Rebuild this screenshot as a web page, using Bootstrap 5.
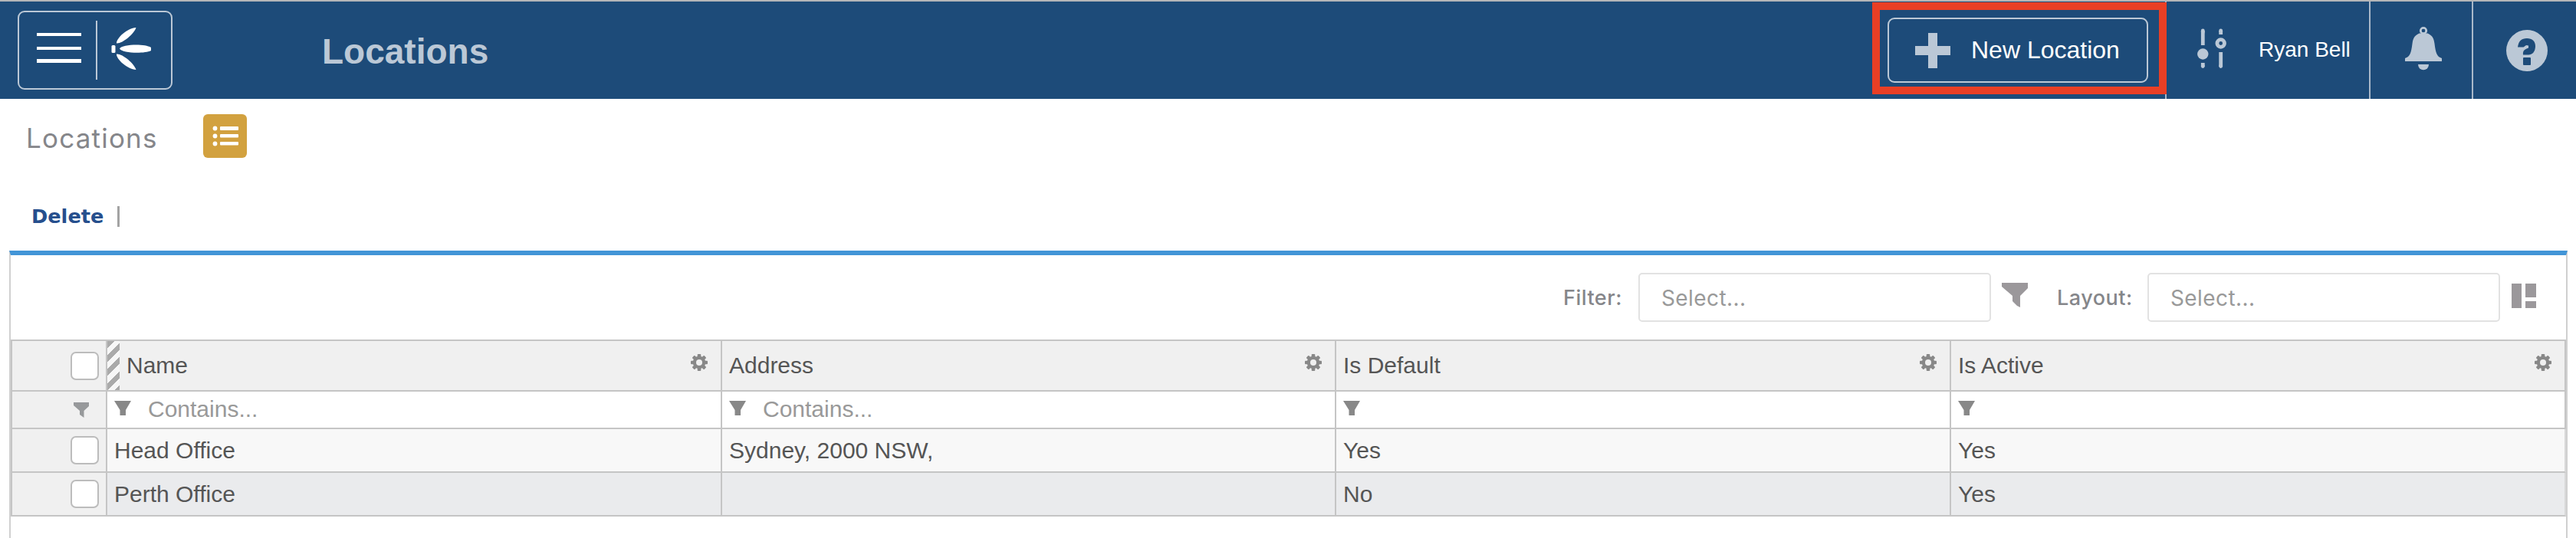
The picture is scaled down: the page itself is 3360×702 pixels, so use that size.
<!DOCTYPE html>
<html lang="en">
<head>
  <meta charset="UTF-8">
  <meta name="viewport" content="width=device-width, initial-scale=1.0">
  <title>Locations</title>
  <link href="https://cdn.jsdelivr.net/npm/bootstrap@5.3.0/dist/css/bootstrap.min.css" rel="stylesheet">
  <style>
    body {
      font-family: "Liberation Sans", Arial, sans-serif;
      font-size: 30px;
      line-height: 34px;
      color: #555;
      background: #fff;
      height: 702px;
      overflow: hidden;
    }

    svg {
      display: block;
      flex-shrink: 0;
    }

    /* top bar */
    .topbar {
      height: 129px;
      background: #1d4b79;
      border-top: 2px solid #b5b6b8;
      color: #fff;
    }

    .menu-box {
      width: 202px;
      height: 103px;
      margin: 12px 0 0 23px;
      border: 2px solid #bbc8d6;
      border-radius: 9px;
    }

    .page-title {
      margin: 39px 0 0 195px;
      font-size: 46px;
      line-height: 52px;
      font-weight: bold;
      color: #bbc8d6;
    }

    .highlight {
      width: 384px;
      height: 120px;
      margin-top: 1px;
      padding: 10px;
      border: 10px solid #e93f25;
      z-index: 1;
    }

    .new-btn {
      width: 340px;
      height: 85px;
      padding: 0 0 0 34px;
      border: 2px solid #bbc8d6;
      border-radius: 9px;
      color: #fff;
      font-size: 32px;
    }

    .new-btn span {
      margin: -1px 0 0 27px;
    }

    .top-cell {
      height: 127px;
      border-left: 2px solid #a9b8c9;
    }

    .user-cell {
      width: 266px;
      margin-left: -2px;
    }

    .user-cell span {
      margin-left: 40px;
      font-size: 28px;
      padding-top: 45px;
      line-height: 36px;
    }

    /* sub header */
    .subhead {
      height: 198px;
      padding: 20px 0 0 34px;
    }

    .soft-font {
      font-family: Inter, "Open Sans", sans-serif;
    }

    .crumb {
      width: 231px;
      padding-top: 9px;
      font-size: 35px;
      line-height: 44px;
      letter-spacing: 1.2px;
      color: #85868a;
    }

    .list-btn {
      width: 57px;
      height: 57px;
      background: #d2a13f;
      border-radius: 6px;
    }

    .actions {
      margin: 61px 0 0 7px;
      gap: 18px;
    }

    .delete-link {
      font-family: "DejaVu Sans", Verdana, sans-serif;
      font-size: 25.6px;
      line-height: 30px;
      font-weight: bold;
      color: #264f8d;
      text-decoration: none;
    }

    .sep {
      width: 3px;
      height: 27px;
      background: #a3a3a3;
    }

    /* grid panel */
    .panel {
      height: 400px;
      margin: 0 11px 0 12px;
      border: 2px solid #d0d0d0;
      border-top: 6px solid #4295d7;
    }

    .tools {
      height: 110px;
      padding: 23px 39px 0 0;
      font-size: 27px;
      color: #85868a;
    }

    .tool-label {
      width: 98px;
      font-weight: 500;
      line-height: 65px;
      letter-spacing: 0.5px;
    }

    .tool-label-wide {
      width: 118px;
      margin-left: 38px;
    }

    .tool-icon {
      margin-left: 14px;
    }

    .select-box {
      width: 460px;
      height: 64px;
      padding-left: 28px;
      border: 2px solid #e2e2e2;
      border-radius: 5px;
      font-size: 28px;
      line-height: 62px;
      letter-spacing: 0.4px;
      color: #999;
    }

    .grid-table {
      width: 3333px;
      table-layout: fixed;
      border-collapse: separate;
      border-spacing: 0;
      border-top: 2px solid #c5c5c5;
      border-left: 2px solid #c5c5c5;
    }

    .grid-table th,
    .grid-table td {
      padding: 0 0 0 9px;
      border-right: 2px solid #c5c5c5;
      border-bottom: 2px solid #c5c5c5;
      font-weight: normal;
      vertical-align: middle;
      white-space: nowrap;
    }

    .grid-table thead th { background: #f0f0f0; }
    .grid-table .row-head { height: 66px; }
    .grid-table .row-filter { height: 49px; }
    .grid-table .row-data { height: 57px; }
    .grid-table .row-data td { background: #f8f8f8; }
    .grid-table .row-alt td { background: #eaebed; }
    .grid-table tr td:first-child { background: #f0f0f0; }
    .grid-table .row-data td:last-child { border-right-color: #d8d8d8; }

    .grid-table .hatched {
      padding-left: 0;
    }

    .hatch {
      width: 16px;
      height: 64px;
      margin-right: 9px;
      background: repeating-linear-gradient(135deg, #aaa 0 6.5px, #f7f7f7 6.5px 13px);
    }

    .gear {
      margin: -8px 17px 0 0;
    }

    .check {
      width: 37px;
      height: 37px;
      margin-left: 67px;
      background: #fff;
      border: 2px solid #bcbcbc;
      border-radius: 7px;
    }

    .hint {
      margin: -1px 0 0 22px;
      color: #999;
    }
  </style>
</head>
<body>
  <!-- shared symbols -->
  <svg width="0" height="0" class="position-absolute">
    <symbol id="gear" viewBox="-11 -11 22 22">
      <g fill="#888">
        <rect x="-2.3" y="-11" width="4.6" height="22" rx="1"/>
        <rect x="-2.3" y="-11" width="4.6" height="22" rx="1" transform="rotate(45)"/>
        <rect x="-2.3" y="-11" width="4.6" height="22" rx="1" transform="rotate(90)"/>
        <rect x="-2.3" y="-11" width="4.6" height="22" rx="1" transform="rotate(135)"/>
        <circle r="8.3"/>
      </g>
      <circle r="4" fill="#f0f0f0"/>
    </symbol>
    <symbol id="funnel" viewBox="0 0 22 19">
      <path d="M0 0H22L15 12V19H7.500V12Z" fill="#888"/>
    </symbol>
  </svg>

  <header class="topbar d-flex align-items-start">
    <div class="menu-box flex-shrink-0">
      <svg width="198" height="99" viewBox="25 16 198 99">
        <path d="M48 43h58v4H48zM48 61h58v4H48zM48 77h58v5H48z" fill="#fff"/>
        <path d="M125 27h2v77h-2z" fill="#bbc8d6"/>
        <g fill="#fff">
          <rect x="145.500" y="59" width="5" height="10" rx="1.500"/>
          <path d="M156 63.500C159 58 188 56.500 197 62V66C188 70.500 159 69.500 156 63.500Z"/>
          <path d="M152 56.500C151.500 50 166 36.500 177.500 36C175 44 160 57 152 56.500Z"/>
          <path d="M152 70.500C151.500 77 166 90.500 177.500 91C175 83 160 70 152 70.500Z"/>
        </g>
      </svg>
    </div>
    <h1 class="page-title">Locations</h1>

    <div class="d-flex ms-auto">
      <div class="highlight position-relative">
        <button class="new-btn btn d-flex align-items-center">
          <svg width="46" height="46"><path d="M17 0h12v17h17v12H29v17H17V29H0V17h17z" fill="#bbc8d6"/></svg>
          <span>New Location</span>
        </button>
      </div>
      <div class="top-cell user-cell d-flex align-items-start">
        <svg width="80" height="127" viewBox="2826 2 80 127">
          <g stroke="#bbc8d6" stroke-width="4.800" fill="none">
            <path d="M2873.300 40v19M2873.300 82v5M2896.700 40v5M2896.700 68v19"/>
            <path d="M2873.300 40v2M2873.300 86v.6M2896.700 40v1M2896.700 86v.6" stroke-linecap="round"/>
          </g>
          <circle cx="2873.300" cy="70.500" r="7.200" fill="#bbc8d6"/>
          <circle cx="2896.700" cy="56.500" r="4.800" fill="none" stroke="#bbc8d6" stroke-width="4.800"/>
        </svg>
        <span>Ryan Bell</span>
      </div>
      <div class="top-cell">
        <svg width="132" height="127" viewBox="3092 2 132 127">
          <g fill="#bbc8d6">
            <circle cx="3161" cy="40" r="3.700" fill="none" stroke="#bbc8d6" stroke-width="2.800"/>
            <path d="M3155.500 43.500H3166.500C3173 46.500 3174.500 50 3175.500 57C3177 69 3178.500 74 3185 76V80H3137V76C3143.500 74 3145 69 3146.500 57C3147.500 50 3149 46.500 3155.500 43.500Z"/>
            <path d="M3154 84h14a7 7.300 0 0 1-14 0z"/>
          </g>
          <circle cx="3161" cy="40" r="2.100" fill="#1d4b79"/>
        </svg>
      </div>
      <div class="top-cell">
        <svg width="134" height="127" viewBox="3226 2 134 127">
          <circle cx="3296" cy="66" r="27" fill="#bbc8d6"/>
          <path d="M3284 61.500C3285 53.500 3289 50 3296 50C3303 50 3307 54 3307 60C3307 67 3303.500 71.500 3298 71.500H3291C3290.500 67 3292 64.500 3298 62.500V59.500L3295 59L3291.500 61.500Z" fill="#1d4b79"/>
          <rect x="3291" y="75" width="10" height="10" rx="1" fill="#1d4b79"/>
        </svg>
      </div>
    </div>
  </header>

  <section class="subhead">
    <div class="d-flex">
      <div class="crumb soft-font">Locations</div>
      <div class="list-btn">
        <svg width="57" height="57" viewBox="265 149 57 57" fill="#fff">
          <circle cx="280.500" cy="167.500" r="2.900"/>
          <circle cx="280.500" cy="177.500" r="2.900"/>
          <circle cx="280.500" cy="187.500" r="2.900"/>
          <rect x="287" y="165" width="24" height="5" rx="1"/>
          <rect x="287" y="175" width="24" height="4.500" rx="1"/>
          <rect x="287" y="185" width="24" height="4.500" rx="1"/>
        </svg>
      </div>
    </div>
    <div class="actions d-flex align-items-center">
      <a href="#" class="delete-link">Delete</a>
      <div class="sep"></div>
    </div>
  </section>

  <main class="panel">
    <div class="tools soft-font d-flex justify-content-end">
      <span class="tool-label">Filter:</span>
      <div class="select-box">Select...</div>
      <svg class="tool-icon" width="34" height="64" viewBox="0 0 34 64"><path d="M0 13H34V20L24 30V45L20 43L14 37V30L0 18Z" fill="#9b989b"/></svg>
      <span class="tool-label tool-label-wide">Layout:</span>
      <div class="select-box">Select...</div>
      <svg class="tool-icon" width="33" height="64"><path d="M1 14H14V46H1zM19 14H33V32H19zM19 37H33V46H19z" fill="#9b989b"/></svg>
    </div>

    <table class="grid-table">
      <colgroup>
        <col style="width: 124px">
        <col style="width: 802px">
        <col style="width: 801px">
        <col style="width: 802px">
        <col style="width: 802px">
      </colgroup>
      <thead>
        <tr class="row-head">
          <th><div class="check"></div></th>
          <th class="hatched">
            <div class="d-flex align-items-center">
              <div class="hatch"></div>Name
              <svg class="gear ms-auto" width="22" height="22"><use href="#gear"/></svg>
            </div>
          </th>
          <th><div class="d-flex align-items-center">Address<svg class="gear ms-auto" width="22" height="22"><use href="#gear"/></svg></div></th>
          <th><div class="d-flex align-items-center">Is Default<svg class="gear ms-auto" width="22" height="22"><use href="#gear"/></svg></div></th>
          <th><div class="d-flex align-items-center">Is Active<svg class="gear ms-auto" width="22" height="22"><use href="#gear"/></svg></div></th>
        </tr>
      </thead>
      <tbody>
        <tr class="row-filter">
          <td><svg class="ms-5" width="60" height="21"><path d="M23 1H43V6L36.500 12V21L31 17V12L23 5Z" fill="#97999b"/></svg></td>
          <td><div class="d-flex align-items-center"><svg width="22" height="24" viewBox="0 0 22 24"><use href="#funnel" width="22" height="19"/></svg><span class="hint">Contains...</span></div></td>
          <td><div class="d-flex align-items-center"><svg width="22" height="24" viewBox="0 0 22 24"><use href="#funnel" width="22" height="19"/></svg><span class="hint">Contains...</span></div></td>
          <td><svg width="22" height="24" viewBox="0 0 22 24"><use href="#funnel" width="22" height="19"/></svg></td>
          <td><svg width="22" height="24" viewBox="0 0 22 24"><use href="#funnel" width="22" height="19"/></svg></td>
        </tr>
        <tr class="row-data">
          <td><div class="check"></div></td>
          <td>Head Office</td>
          <td>Sydney, 2000 NSW,</td>
          <td>Yes</td>
          <td>Yes</td>
        </tr>
        <tr class="row-data row-alt">
          <td><div class="check"></div></td>
          <td>Perth Office</td>
          <td></td>
          <td>No</td>
          <td>Yes</td>
        </tr>
      </tbody>
    </table>
  </main>

  <script src="https://cdn.jsdelivr.net/npm/bootstrap@5.3.0/dist/js/bootstrap.bundle.min.js"></script>
</body>
</html>
